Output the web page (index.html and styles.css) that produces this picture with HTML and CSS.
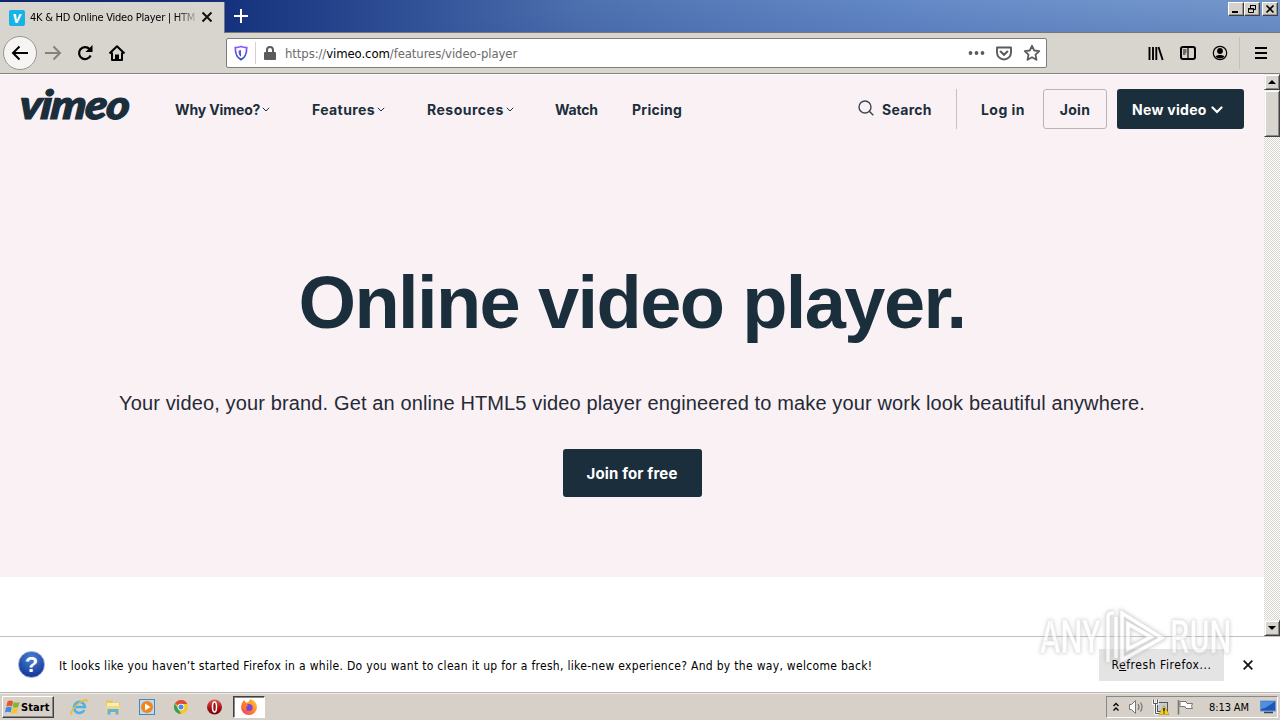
FILE: index.html
```
<!DOCTYPE html>
<html lang="en">
<head>
<meta charset="utf-8">
<title>4K &amp; HD Online Video Player | HTML5</title>
<link rel="stylesheet" href="styles.css">
</head>
<body>
<div class="screen">
  <header class="tabbar">
    <div class="tab">
      <span class="favicon">v</span>
      <span class="tab-title">4K &amp; HD Online Video Player | HTM</span>
      <svg class="tab-close" width="12" height="12" viewBox="0 0 12 12"><path d="M1.5 1.5l9 9M10.500 1.500l-9 9" stroke="#111" stroke-width="2" fill="none"/></svg>
    </div>
    <svg class="new-tab" width="16" height="16" viewBox="0 0 16 16"><path d="M8 1v14M1 8h14" stroke="#fff" stroke-width="2"/></svg>
    <div class="window-buttons">
      <span class="winbtn"><svg width="14" height="12" viewBox="0 0 14 12"><path d="M3 9h6" stroke="#000" stroke-width="2"/></svg></span>
      <span class="winbtn"><svg width="14" height="12" viewBox="0 0 14 12"><path d="M5.500 5V2.500h5v4H9M5 2.500h6M3.500 5.500h5v4h-5zM3 6h6" stroke="#000" fill="none"/></svg></span>
      <span class="winbtn gap"><svg width="14" height="12" viewBox="0 0 14 12"><path d="M3.500 2.500l7 7M10.500 2.500l-7 7" stroke="#000" stroke-width="1.700"/></svg></span>
    </div>
  </header>

  <div class="toolbar">
    <span class="back"><svg width="18" height="16" viewBox="0 0 18 16"><path d="M17 8H2M8.500 1.500L2 8l6.500 6.500" fill="none" stroke="#000" stroke-width="2"/></svg></span>
    <svg class="forward" width="18" height="16" viewBox="0 0 18 16"><path d="M1 8h15M9.500 1.500L16 8l-6.500 6.500" fill="none" stroke="#85827c" stroke-width="2"/></svg>
    <svg class="reload" width="16" height="16" viewBox="0 0 16 16"><path d="M13.600 10.500A6 6 0 1 1 12.500 4" fill="none" stroke="#000" stroke-width="2.200"/><path d="M15.500 0v7H8.500z" fill="#000"/></svg>
    <svg class="home" width="18" height="18" viewBox="0 0 18 18"><path d="M1.500 9.500L9 2.300l7.500 7.200M4 8.500v7.400h10V8.500" fill="none" stroke="#000" stroke-width="2" stroke-linejoin="round"/><path d="M7 16v-5.500h4V16z"/></svg>
    <div class="urlbar">
      <svg class="shield" width="14" height="16" viewBox="0 0 14 16"><defs><linearGradient id="sh" x2="0" y2="1"><stop stop-color="#9059ff"/><stop offset="1" stop-color="#2c4ec0"/></linearGradient></defs><path d="M7 1.500C5 2.200 3 2.500 1.300 2.600c0 5.500.7 9.500 5.700 12 5-2.500 5.700-6.500 5.700-12C11 2.500 9 2.200 7 1.500z" fill="none" stroke="url(#sh)" stroke-width="1.800"/><path d="M7 4.800v6.900C4.800 10 4.500 8 4.500 5.400 5.300 5.300 6.300 5.100 7 4.800z" fill="url(#sh)"/></svg>
      <i class="url-sep"></i>
      <svg class="lock" width="12" height="14" viewBox="0 0 12 14"><path d="M3 7V4a3 3 0 0 1 6 0v3" fill="none" stroke="#5b5b5b" stroke-width="2"/><rect y="6" width="12" height="8" rx="1" fill="#5b5b5b"/></svg>
      <span class="url">https://<b>vimeo.com</b>/features/video-player</span>
      <span class="url-icons">
        <svg width="17" height="6" viewBox="0 0 17 6" fill="#5b5b5b"><circle cx="2.500" cy="3" r="1.900"/><circle cx="8.500" cy="3" r="1.900"/><circle cx="14.500" cy="3" r="1.900"/></svg>
        <svg width="16" height="15" viewBox="0 0 16 15"><path d="M1 1.500h14V6.500a7 7 0 0 1-14 0z" fill="none" stroke="#5b5b5b" stroke-width="1.900" stroke-linejoin="round"/><path d="M4.600 5.500L8 8.800l3.400-3.300" fill="none" stroke="#5b5b5b" stroke-width="2" stroke-linecap="round"/></svg>
        <svg width="18" height="18" viewBox="0 0 18 18"><path d="M9 1.800l2.200 4.700 5.100.6-3.800 3.500 1 5.200L9 13.300l-4.500 2.500 1-5.200L1.700 7.100l5.100-.6z" fill="none" stroke="#5b5b5b" stroke-width="1.800" stroke-linejoin="round"/></svg>
      </span>
    </div>
    <div class="tools">
      <svg width="16" height="16" viewBox="0 0 16 16"><path d="M1.500 2v13M5 2v13M8.300 2v13" stroke="#000" stroke-width="1.900"/><path d="M10.500 2l4.200 13" stroke="#000" stroke-width="1.900"/></svg>
      <svg width="16" height="14" viewBox="0 0 16 14"><rect x="1" y="1" width="14" height="12" rx="2" fill="none" stroke="#000" stroke-width="2"/><path d="M8 1v12" stroke="#000" stroke-width="1.200"/><path d="M3 4h3.500M3 6h3.500M3 8h2.500" stroke="#000"/></svg>
      <svg width="16" height="16" viewBox="0 0 16 16"><circle cx="8" cy="8" r="6.700" fill="none" stroke="#000" stroke-width="1.200"/><circle cx="8" cy="6" r="2.900"/><path d="M3.500 11.500C5 9.500 11 9.500 12.500 11.500 10.500 14 5.500 14 3.500 11.500z"/></svg>
    </div>
    <i class="tool-sep"></i>
    <svg class="burger" width="12" height="12" viewBox="0 0 12 12"><path d="M0 1h12M0 6h12M0 11h12" stroke="#000" stroke-width="2"/></svg>
  </div>

  <main class="viewport">
    <div class="page">
      <section class="hero">
        <nav class="nav">
          <span class="logo"><span>vimeo</span></span>
          <a class="n1">Why Vimeo?<svg width="8" height="5" viewBox="0 0 8 5"><path d="M.8.8L4 4 7.200.8"/></svg></a>
          <a class="n2">Features<svg width="8" height="5" viewBox="0 0 8 5"><path d="M.8.8L4 4 7.200.8"/></svg></a>
          <a class="n3">Resources<svg width="8" height="5" viewBox="0 0 8 5"><path d="M.8.8L4 4 7.200.8"/></svg></a>
          <a class="n4">Watch</a>
          <a class="n5">Pricing</a>
          <div class="nav-right">
            <svg class="glass" width="16" height="16" viewBox="0 0 16 16"><circle cx="7" cy="7" r="6" fill="none" stroke="#3c4650" stroke-width="1.400"/><path d="M11.300 11.300l4 4" stroke="#3c4650" stroke-width="1.500"/></svg>
            <a class="search">Search</a>
            <i class="nav-sep"></i>
            <a class="login">Log in</a>
            <a class="join">Join</a>
            <a class="new-video">New video<svg width="12" height="8" viewBox="0 0 12 8"><path d="M1.500 1.500L6 6l4.500-4.500" fill="none" stroke="#fff" stroke-width="2.200" stroke-linecap="round"/></svg></a>
          </div>
        </nav>
        <h1>Online video player.</h1>
        <p>Your video, your brand. Get an online HTML5 video player engineered to make your work look beautiful anywhere.</p>
        <a class="cta">Join for free</a>
      </section>
    </div>
    <div class="scrollbar">
      <span class="sb-btn"><svg width="8" height="4" viewBox="0 0 8 4"><path d="M0 4h8L4 0z"/></svg></span>
      <span class="sb-thumb"></span>
      <span class="sb-btn bottom"><svg width="8" height="4" viewBox="0 0 8 4"><path d="M0 0h8L4 4z"/></svg></span>
    </div>
  </main>

  <div class="notice">
    <span class="help">?</span>
    <span class="notice-text">It looks like you haven’t started Firefox in a while. Do you want to clean it up for a fresh, like-new experience? And by the way, welcome back!</span>
    <button class="refresh">R<u>e</u>fresh Firefox...</button>
    <svg class="notice-close" width="10" height="10" viewBox="0 0 10 10"><path d="M.7.7l8.600 8.600M9.300.7L.7 9.300" stroke="#111" stroke-width="1.700"/></svg>
    <div class="watermark"><span>ANY</span><svg width="62" height="64" viewBox="0 0 62 64"><path d="M3 57V12q0-4 4-4h2M11 53V12M17 8v47l40-22zM23 19v25l23-12z" fill="none" stroke="#d0d0d0" stroke-width="5"/><path d="M3 57V12q0-4 4-4h2M11 53V12M17 8v47l40-22zM23 19v25l23-12z" fill="none" stroke="#fff" stroke-width="3.400"/></svg><span>RUN</span></div>
  </div>

  <footer class="taskbar">
    <div class="start"><svg width="15" height="14" viewBox="0 0 15 14"><path d="M2.500 1.500q3-2 5.500 0L7 6.500Q4 5 1.300 6.800z" fill="#e9552b"/><path d="M8.700 2q3 1.400 5.800 0L13.200 7q-3 1.400-5.500-.1z" fill="#7db735"/><path d="M1 7.700q3-1.700 5.700-.1L5.600 12.500Q3 11 0 12.500z" fill="#3b8be0"/><path d="M7.500 8q3 1.500 5.500 0l-1.200 5Q9 14.300 6.300 13z" fill="#f8c32c"/></svg>Start</div>
    <div class="launch">
      <svg width="18" height="18" viewBox="0 0 18 18"><path d="M14.300 12a5.500 5.500 0 1 1 .6-3H5" fill="none" stroke="#4bb3e6" stroke-width="2.600"/><path d="M2 15.500C-1 18 3 9 9 5s9-4.500 7.500-1" fill="none" stroke="#edba34" stroke-width="1.500"/></svg>
      <svg width="18" height="18" viewBox="0 0 18 18"><path d="M2 2.500h6l1 2h7v10H2z" fill="#e8c85e"/><path d="M3 5h12v5H3z" fill="#f9eeb4"/><path d="M2 8h14v7H2z" fill="#f2d981"/><path d="M3.500 16.500V11h11v5.500h-3V14h-5v2.500z" fill="#62b2dd"/></svg>
      <svg width="18" height="18" viewBox="0 0 18 18"><rect x="1.500" y="1.500" width="15" height="15" fill="#b9dcf5" stroke="#4a86bd"/><circle cx="9" cy="9" r="6" fill="#f38417"/><path d="M7 5.500v7l5.500-3.500z" fill="#fff"/></svg>
      <svg width="18" height="18" viewBox="0 0 18 18"><circle cx="9" cy="9" r="7" fill="#f6c927"/><path d="M9 9L2.900 5.500A7 7 0 0 1 15.300 6H9z" fill="#df4937"/><path d="M2.900 5.500L7 12l2 4A7 7 0 0 1 2.900 5.500z" fill="#36a156"/><circle cx="9" cy="9" r="3.300" fill="#fff"/><circle cx="9" cy="9" r="2.500" fill="#428be8"/></svg>
      <svg width="18" height="18" viewBox="0 0 18 18"><defs><linearGradient id="op" x2="0" y2="1"><stop stop-color="#e25a55"/><stop offset=".6" stop-color="#a60d12"/><stop offset="1" stop-color="#710407"/></linearGradient></defs><circle cx="8.500" cy="9" r="7.500" fill="url(#op)"/><ellipse cx="8.500" cy="9" rx="2" ry="5" fill="#a01014" stroke="#fff" stroke-width="1.500"/></svg>
    </div>
    <div class="active-task"><svg width="18" height="18" viewBox="0 0 18 18"><defs><linearGradient id="ff" x1="1" x2="0" y2="1"><stop stop-color="#ffd532"/><stop offset=".5" stop-color="#ff862e"/><stop offset="1" stop-color="#f02d62"/></linearGradient></defs><path d="M2 5L4 2l2 2.500h2L10 1c4 1 7 4 7 8A8 8 0 1 1 1 9z" fill="url(#ff)"/><circle cx="9" cy="9.500" r="3.600" fill="#7e44d8"/><path d="M4 6l4 1-1 1.500q-2 1 0 3c-2 1-4 0-5-2z" fill="#ff792e"/></svg></div>
    <div class="tray">
      <svg class="chev" width="6" height="10" viewBox="0 0 6 10"><path d="M.5 4L3 1.500 5.500 4M.5 8.500L3 6l2.500 2.500" fill="none" stroke="#000" stroke-width="1.300"/></svg>
      <svg class="speaker" width="18" height="16" viewBox="0 0 18 16"><path d="M1.500 5.500h2l4-4v13l-4-4h-2z" fill="#fff" stroke="#777"/><path d="M10 5q2 3 0 6M12.500 3.500q3 4.500 0 9" fill="none" stroke="#777" stroke-width="1.200"/></svg>
      <svg class="net" width="18" height="16" viewBox="0 0 18 16"><rect x="5.500" y="3.500" width="10" height="9" fill="#c3cdd5" stroke="#555"/><path d="M1.500.5v4h4v-4M3.500 4.500v10h4" fill="none" stroke="#fff" stroke-width="2.500"/><path d="M1.500.5v4h4v-4M3.500 4.500v10h4" fill="none" stroke="#555"/><path d="M12 6.500l5 9H7z" fill="#f8cf28" stroke="#b98f0c" stroke-width=".6"/><path d="M12 9v3.500M12 13.500v1" stroke="#000" stroke-width="1.300"/></svg>
      <svg class="flag" width="17" height="16" viewBox="0 0 17 16"><path d="M3 2.500h6l1 2h5.500q-2 3 0 5H9l-1-2H3z" fill="#fff" stroke="#777"/><path d="M1.500 1v14.500" stroke="#777" stroke-width="1.600"/></svg>
      <span class="clock">8:13 AM</span>
      <svg class="monitor" width="16" height="14" viewBox="0 0 16 14"><rect x=".5" y="1" width="15" height="10" fill="#1e55b8" stroke="#6d94cf"/><path d="M1 1.500h14L5 8l-4 1z" fill="#4f8fe0"/><path d="M4 12.500h9" stroke="#345" stroke-width="1.500"/></svg>
    </div>
  </footer>
</div>
</body>
</html>
```

FILE: styles.css
```
* { box-sizing: border-box; }
body { margin: 0; overflow: hidden; }
.screen { width: 1280px; height: 720px; display: flex; flex-direction: column; overflow: hidden; background: #fff; font-family: "DejaVu Sans Condensed", "DejaVu Sans", sans-serif; font-size: 11px; color: #000; white-space: nowrap; }
svg { flex: none; display: block; }
i { flex: none; }

.tabbar { height: 33px; flex: none; display: flex; align-items: flex-start; background: linear-gradient(172deg, rgba(160,205,240,0) 40%, rgba(20,45,130,.4)), linear-gradient(90deg, #0c256c 0%, #14307c 17%, #28478f 28%, #4c6fae 45%, #6f96d0 70%, #9cc4ea 100%); border-bottom: 1px solid #77777c; }
.tab { width: 225px; height: 31px; margin-top: 2px; padding-left: 9px; display: flex; align-items: center; background: #d8d4ce; border-right: 1px solid #6c7486; box-shadow: 0 1px #d8d4ce; }
.favicon { width: 16px; height: 16px; border-radius: 2px; background: #17b2e8; color: #fff; font: italic 900 17px/13px Lato, sans-serif; text-align: center; flex: none; }
.tab-title { width: 167px; margin-left: 5px; letter-spacing: -.25px; -webkit-mask-image: linear-gradient(90deg, #000 145px, transparent 170px); mask-image: linear-gradient(90deg, #000 145px, transparent 170px); }
.tab-close { margin: -2px 0 0 4px; }
.new-tab { margin: 8px 0 0 8px; }
.window-buttons { margin: 2px 2px 0 auto; display: flex; }
.winbtn { width: 16px; height: 14px; background: #d6d2cb; border: 1px solid; border-color: #fff #404040 #404040 #fff; box-shadow: inset -1px -1px #999; }
.winbtn.gap { margin-left: 2px; }

.toolbar { height: 41px; flex: none; display: flex; align-items: center; background: #d8d4ce; border-bottom: 1px solid #85827d; padding-left: 3px; }
.back { width: 34px; height: 34px; border: 1px solid #99968f; border-radius: 50%; background: #f6f5f4; display: grid; place-items: center; }
.forward { margin-left: 7px; }
.reload { margin-left: 15px; }
.home { margin-left: 15px; }
.urlbar { width: 821px; height: 30px; margin-left: 100px; display: flex; align-items: center; background: #fff; border: 1px solid #807d78; border-radius: 2px; }
.shield { margin-left: 7px; }
.url-sep { width: 1px; height: 22px; background: #d6cfda; margin: 0 8px 0 7px; }
.url { margin-left: 9px; font-size: 13px; color: #6b6b6b; letter-spacing: -.09px; }
.url b { font-weight: 400; color: #000; }
.url-icons { margin: 0 5px 0 auto; display: flex; align-items: center; gap: 11px; }
.tools { display: flex; align-items: center; gap: 16px; margin-left: 101px; }
.tool-sep { width: 1px; height: 32px; background: #c4c0ba; margin: 0 15px 0 11px; }

.viewport { height: 562px; flex: none; display: flex; }
.page { width: 1264px; background: #fff; }
.hero { height: 503px; background: #faf1f5; border-top: 1px solid #fff; display: flex; flex-direction: column; align-items: center; color: #1a2e3b; }
.nav { align-self: stretch; height: 68px; display: flex; align-items: center; padding: 0 20px; font: 700 14px Inter, sans-serif; }
.nav a { display: flex; align-items: center; flex: none; }
.nav a > svg { margin-left: 2px; fill: none; stroke: #1a2e3b; }
.logo { width: 155px; margin-top: -11px; flex: none; }
.logo span { display: inline-block; font: italic 900 40px/50px Lato, sans-serif; letter-spacing: -1px; -webkit-text-stroke: 1.2px #1a2e3b; transform: scaleX(1.12) skewX(-5deg); transform-origin: left; }
.n1 { width: 137px; letter-spacing: -.12px; }
.n2 { width: 115px; letter-spacing: .4px; }
.n3 { width: 128px; letter-spacing: .5px; }
.n4 { width: 77px; letter-spacing: -.2px; }
.n5 { letter-spacing: .25px; }
.nav-right { margin-left: auto; display: flex; align-items: center; }
.glass { margin-top: -2px; }
.search { width: 50px; margin-left: 8px; letter-spacing: .3px; }
.nav-sep { width: 1px; height: 40px; background: #c5bfc4; margin: 0 24px; }
.login { width: 44px; letter-spacing: .45px; }
.nav .join { width: 64px; height: 40px; margin-left: 18px; justify-content: center; border: 1px solid #b9b4bb; border-radius: 3px; letter-spacing: .3px; }
.nav .new-video { width: 127px; height: 40px; margin-left: 10px; padding-left: 15px; background: #1a2e3b; color: #fff; border-radius: 3px; letter-spacing: .3px; }
.nav .new-video svg { margin: 2px 0 0 4px; }
h1 { margin: 113px 0 0; font: 700 74px/94px "Liberation Sans", Arial, sans-serif; letter-spacing: -1.6px; }
p { margin: 41px 0 0; font: 20px/24px "Liberation Sans", Arial, sans-serif; letter-spacing: .135px; color: #252a35; }
.cta { width: 139px; height: 48px; margin-top: 34px; border-radius: 3px; background: #1a2e3b; color: #fff; font: 700 15px/49px Inter, sans-serif; letter-spacing: .15px; text-align: center; }

.scrollbar { width: 16px; display: flex; flex-direction: column; background: repeating-conic-gradient(#fff 0 25%, #d8d4ce 0 50%) 0 0 / 2px 2px; }
.sb-btn, .sb-thumb { height: 16px; flex: none; display: grid; place-items: center; background: #d8d4ce; border: 1px solid; border-color: #eee #404040 #404040 #eee; box-shadow: inset 1px 1px #fff, inset -1px -1px #888; }
.sb-thumb { height: 47px; }
.sb-btn.bottom { margin-top: auto; }

.notice { height: 57px; flex: none; display: flex; align-items: center; position: relative; border-top: 1px solid #c0c0c0; border-bottom: 1px solid #b9b6b2; padding-left: 18px; }
.help { width: 27px; height: 27px; border-radius: 50%; border: 1px solid #8ba4d4; background: radial-gradient(circle at 50% 25%, #4a82d6, #173d9c 75%); color: #fff; font: 700 22px/25px "Liberation Sans", sans-serif; text-align: center; }
.notice-text { width: 1040px; margin-left: 14px; padding-top: 2px; letter-spacing: .305px; font-size: 12px; }
.refresh { width: 125px; height: 32px; border: 0; background: #e4e4e4; padding: 0; font: 12px "DejaVu Sans Condensed", sans-serif; letter-spacing: .55px; }
.notice-close { margin-left: 19px; }
.watermark { position: absolute; left: 1040px; top: -32px; display: flex; align-items: center; gap: 3px; opacity: .65; pointer-events: none; filter: drop-shadow(0 0 2px #aaa); }
.watermark span { width: 62px; font: 500 46px/60px Roboto, sans-serif; color: #fff; -webkit-text-stroke: .5px #ddd; transform: scaleX(.67); transform-origin: left; }

.taskbar { height: 27px; flex: none; display: flex; align-items: center; background: #d6d0c8; border-top: 1px solid #efedea; padding: 0 2px; }
.start { width: 52px; height: 22px; display: flex; align-items: center; gap: 1px; padding-left: 2px; border: 1px solid; border-color: #fff #404040 #404040 #fff; box-shadow: inset -1px -1px #888; font-weight: 700; letter-spacing: .1px; }
.launch { display: flex; gap: 16px; margin-left: 16px; }
.active-task { width: 32px; height: 22px; margin-left: 9px; background: #fff; border: 1px solid; border-color: #404040 #fff #fff #404040; box-shadow: inset 1px 1px #888; display: grid; place-items: center; }
.tray { width: 172px; height: 22px; margin-left: auto; display: flex; align-items: center; border: 1px solid; border-color: #888 #fff #fff #888; padding-left: 6px; }
.speaker { margin-left: 9px; }
.net { margin-left: 6px; }
.flag { margin-left: 7px; }
.clock { width: 42px; margin-left: 15px; letter-spacing: -.1px; }
.monitor { margin-left: 9px; }
```
